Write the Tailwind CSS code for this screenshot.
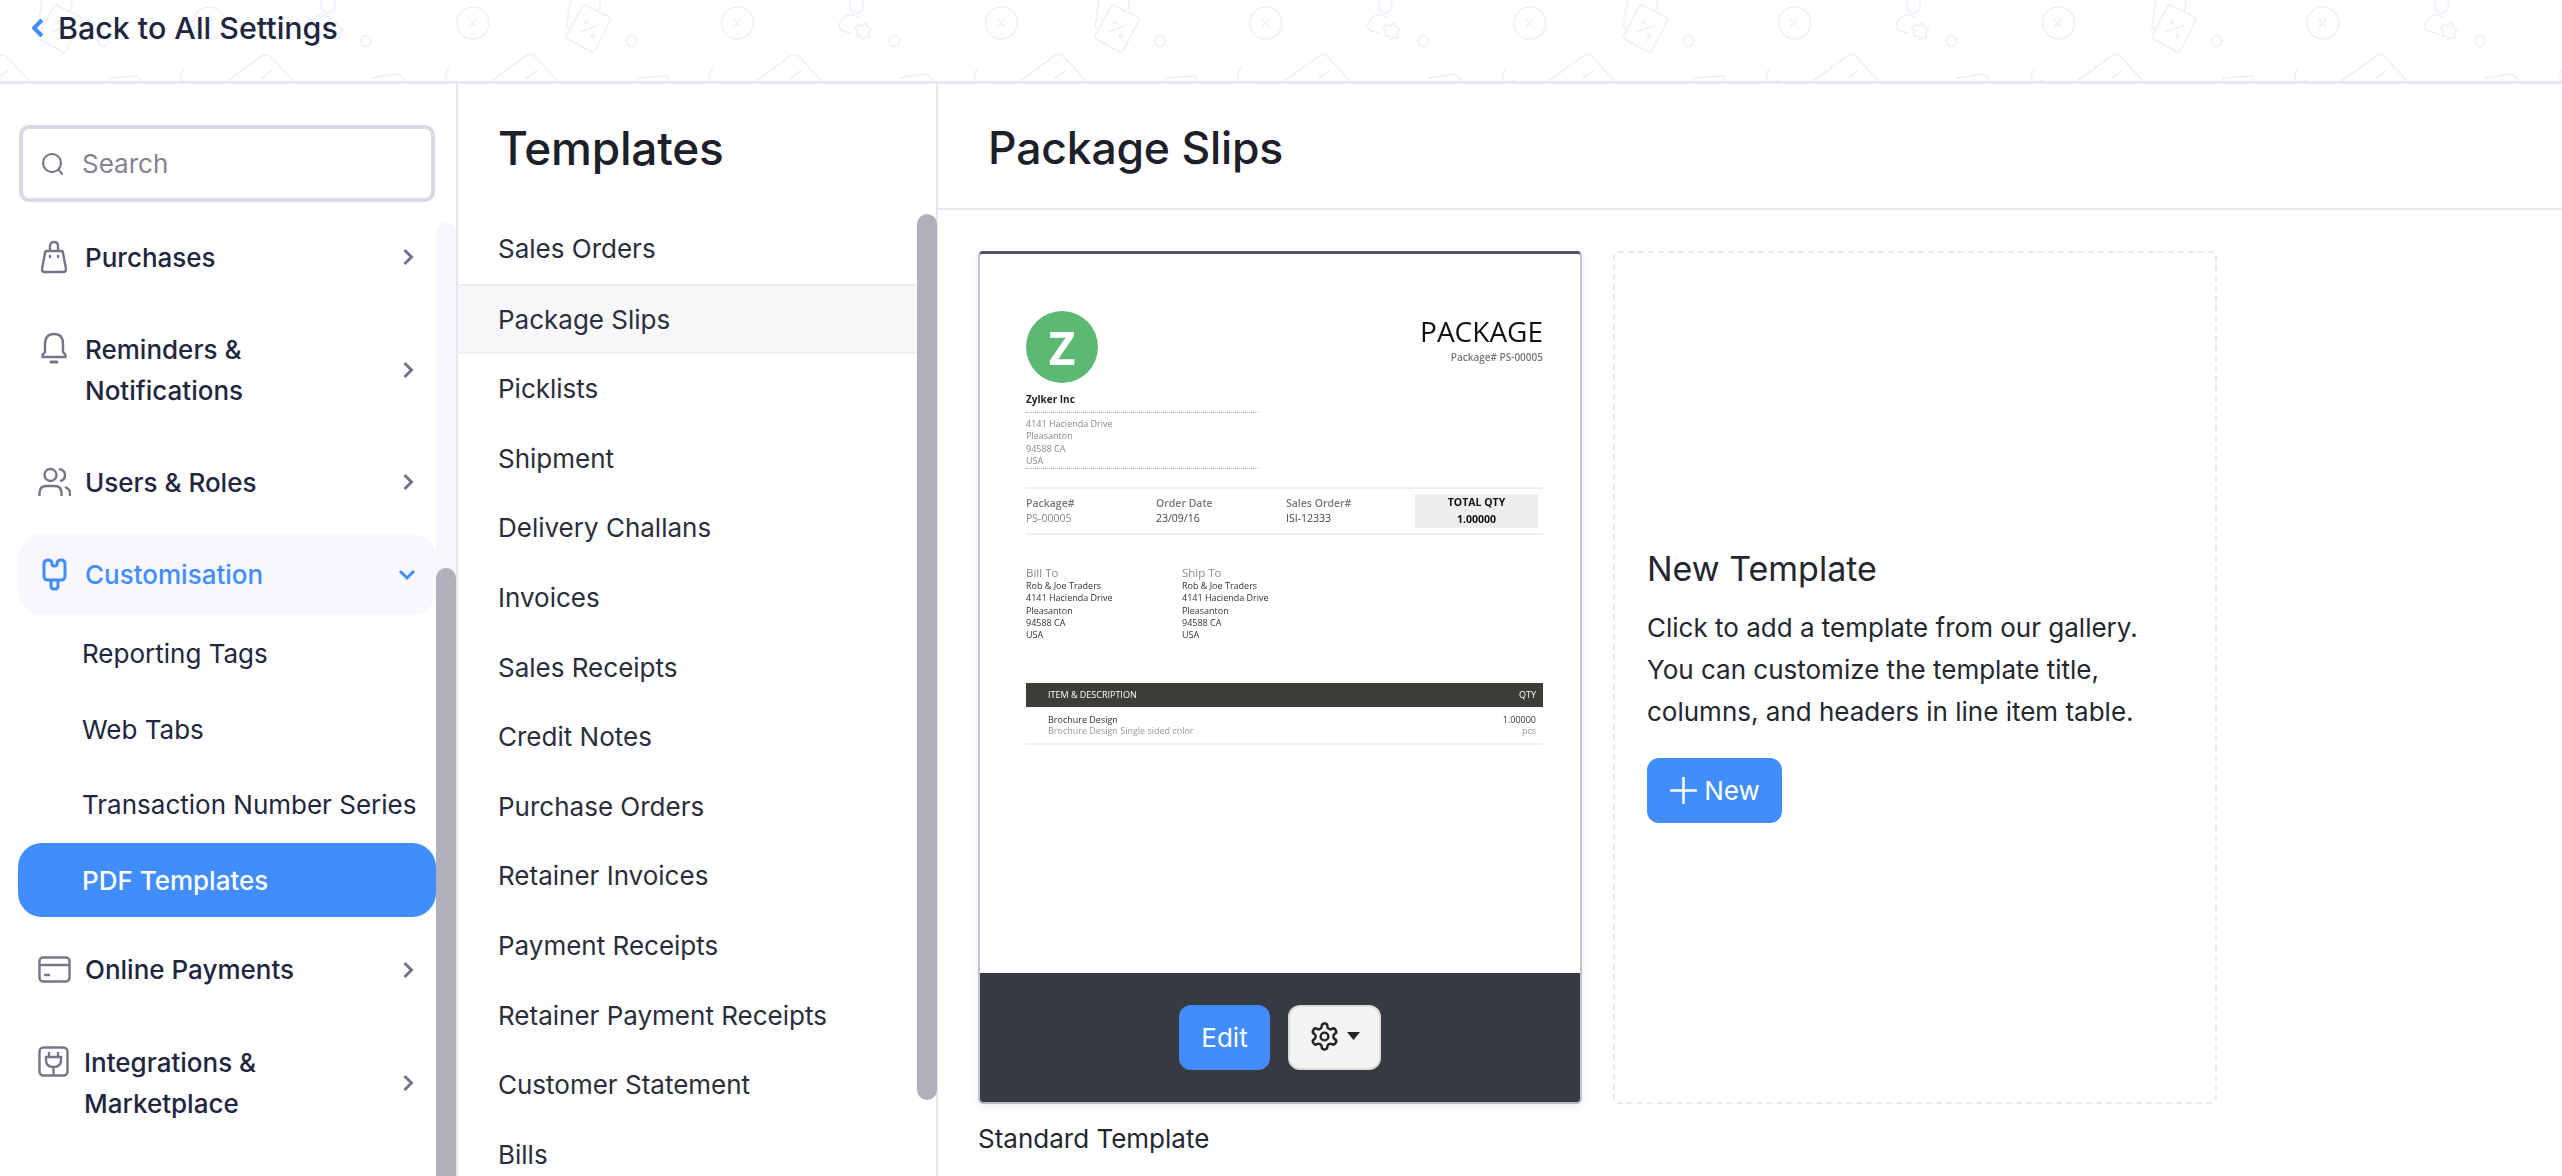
<!doctype html>
<html><head><meta charset="utf-8"><script src="https://cdn.jsdelivr.net/npm/@tailwindcss/browser@4"></script></head>
<body class="bg-white">
<div class="w-[2562px] h-[1176px] overflow-hidden flex flex-col font-['Inter',sans-serif] text-[#1f243a]">
  <header class="relative h-[84px] shrink-0 border-b-[3px] border-[#e8e8f3] flex items-center pb-[26px] pl-[31px] overflow-hidden">
    <svg class="absolute inset-0" width="2562" height="84" fill="none">
      <defs><pattern id="bgp" x="0" y="0" width="528.5" height="84" patternUnits="userSpaceOnUse">
        <g stroke="#eeeefb" stroke-width="1.6" stroke-linecap="round" stroke-linejoin="round">
          <circle cx="209" cy="23" r="16"/><path d="M205 19l7 8M212 19l-7 8"/>
          <circle cx="473" cy="23" r="16"/><path d="M469 19l7 8M476 19l-7 8"/>
          <path d="M42 0l-4 26q0 3 3 3M72 0l-1 10"/>
          <path d="M56 5L81 17q1 1 1 3L66 51q-1 2-3 1L39 39q-1-1-1-3L54 6q1-1 2-1z"/><path d="M52 32l18-7"/><circle cx="58" cy="22" r="1.600"/><circle cx="64" cy="36" r="1.600"/>
          <ellipse cx="103" cy="41" rx="5" ry="5.500"/><ellipse cx="366" cy="41" rx="5" ry="5.500"/>
          <ellipse cx="328" cy="5" rx="7" ry="8"/>
          <path d="M330 18q-8-6-14-1q-8 7-4 13l12 4"/><path d="M330 24l4 2 3-4 2 5 4 2-3 4 1 5-4-1-3 3-2-4-4 0 1-5-3-3 4-3z"/>
          <path d="M-38 82L-2 56q5-4 9 1L30 82M226 82L262 56q5-4 9 1L294 82M490 82L526 56q5-4 9 1L558 82"/><path d="M262 78l10-7M526 78l10-7M-2 78l10-7"/>
          <path d="M108 82l1-4 29-2 3 6M371 78l25-4q5 0 9 8"/>
          <path d="M184 68q-6 10-1 13q4 2 9-1M449 68q-6 10-1 13q4 2 9-1"/>
        </g></pattern></defs>
      <rect width="2562" height="84" fill="url(#bgp)"/>
    </svg>
    <svg class="relative shrink-0" width="14" height="20" viewBox="0 0 14 20" fill="none"><path d="M11 2L3 10l8 8" stroke="#408dfb" stroke-width="4" stroke-linejoin="round"/></svg>
    <span class="relative ml-[13px] text-[30.400px] leading-[40px] font-medium text-[#1e2640]">Back to All Settings</span>
  </header>
  <div class="flex flex-1 min-h-0">
    <!-- settings nav -->
    <aside class="w-[458px] shrink-0 border-r-2 border-[#e6e6ec] flex flex-col">
      <div class="h-[138px] shrink-0 pl-[19px] pt-[41px]">
        <div class="w-[416px] h-[77px] rounded-[10px] border-[4px] border-[#d9d8e5] flex items-center pl-[18px]">
          <svg width="24" height="24" viewBox="0 0 24 24" fill="none" stroke="#6f7080" stroke-width="2"><circle cx="11" cy="11" r="9"/><path d="M18 18l3 4" stroke-linecap="round"/></svg>
          <span class="ml-[17px] text-[26px] text-[#83838f]">Search</span>
        </div>
      </div>
      <div class="flex flex-1 min-h-0">
        <nav class="w-[436px] shrink-0 text-[26px] leading-[41px] font-medium text-[#1f2640]">
          <div class="h-[70px] flex items-center">
            <span class="w-[85px] pl-[41px] shrink-0"><svg class="block" width="26" height="34" viewBox="0 0 26 34" fill="none" stroke="#75758a" stroke-width="2.400"><path d="M6 11h14q2 0 2 2l3 16q0 3-3 3H4q-3 0-3-3l3-16q0-2 2-2z"/><path d="M9 11V6q0-4 4-4t4 4v5"/><path d="M9 16v1M17 16v1" stroke-linecap="round"/></svg></span>
            <span class="flex-1">Purchases</span>
            <svg class="mr-[22px]" width="12" height="20" viewBox="0 0 12 20" fill="none"><path d="M2.500 3l7 7-7 7" stroke="#75758a" stroke-width="3"/></svg>
          </div>
          <div class="h-[156px] flex items-center">
            <span class="w-[85px] pl-[41px] shrink-0 self-start pt-[40px]"><svg class="block" width="26" height="32" viewBox="0 0 26 32" fill="none" stroke="#75758a" stroke-width="2.400"><path d="M13 2q-9 0-9 10v8l-2.500 3v2h23v-2L22 20v-8q0-10-9-10z" stroke-linejoin="round"/><path d="M10 30h6" stroke-linecap="round" stroke-width="3"/></svg></span>
            <span class="flex-1">Reminders &amp;<br>Notifications</span>
            <svg class="mr-[22px]" width="12" height="20" viewBox="0 0 12 20" fill="none"><path d="M2.500 3l7 7-7 7" stroke="#75758a" stroke-width="3"/></svg>
          </div>
          <div class="h-[68px] flex items-center">
            <span class="w-[85px] pl-[38px] shrink-0"><svg class="block" width="33" height="30" viewBox="0 0 33 30" fill="none" stroke="#75758a" stroke-width="2.400"><circle cx="12.500" cy="8" r="6"/><path d="M1.500 29v-3q0-7 7-7h8q7 0 7 7v3"/><path d="M21 2q6 1 6 6t-5 6M27 20q5 2 5 6v3" /></svg></span>
            <span class="flex-1">Users &amp; Roles</span>
            <svg class="mr-[22px]" width="12" height="20" viewBox="0 0 12 20" fill="none"><path d="M2.500 3l7 7-7 7" stroke="#75758a" stroke-width="3"/></svg>
          </div>
          <div class="mt-[18px] ml-[18px] h-[81px] rounded-[24px] bg-[#f7f7fd] flex items-center text-[#408dfb]">
            <span class="w-[67px] pl-[24px] shrink-0"><svg class="block" width="25" height="33" viewBox="0 0 25 33" fill="none" stroke="#408dfb" stroke-width="3"><path d="M6 2Q2 2 2 6v12q0 4 4 4h13q4 0 4-4V6q0-4-4-4-4 0-4 4 0 2-2.500 2T10 6Q10 2 6 2z"/><path d="M9 22v6q0 3 3.500 3t3.500-3v-6"/></svg></span>
            <span class="flex-1">Customisation</span>
            <svg class="mr-[20px]" width="18" height="12" viewBox="0 0 18 12" fill="none"><path d="M2 2l7 7 7-7" stroke="#408dfb" stroke-width="3"/></svg>
          </div>
          <div class="font-normal pl-[82px] whitespace-nowrap">
            <div class="h-[77px] flex items-center">Reporting Tags</div>
            <div class="h-[74px] flex items-center">Web Tabs</div>
            <div class="h-[77px] flex items-center">Transaction Number Series</div>
          </div>
          <div class="ml-[18px] h-[74px] rounded-[24px] bg-[#408dfb] text-white flex items-center pl-[64px]">PDF Templates</div>
          <div class="mt-[17px] h-[71px] flex items-center">
            <span class="w-[85px] pl-[38px] shrink-0"><svg class="block" width="33" height="27" viewBox="0 0 33 27" fill="none" stroke="#75758a" stroke-width="2.400"><rect x="1.500" y="1.500" width="30" height="24" rx="3.500"/><path d="M1.500 9h30"/><path d="M7 19h4" stroke-linecap="round"/></svg></span>
            <span class="flex-1">Online Payments</span>
            <svg class="mr-[22px]" width="12" height="20" viewBox="0 0 12 20" fill="none"><path d="M2.500 3l7 7-7 7" stroke="#75758a" stroke-width="3"/></svg>
          </div>
          <div class="h-[156px] flex items-center">
            <span class="w-[84px] pl-[38px] shrink-0 self-start pt-[41px]"><svg class="block" width="31" height="31" viewBox="0 0 31 31" fill="none" stroke="#75758a" stroke-width="2.400"><rect x="1.500" y="1.500" width="28" height="28" rx="4"/><path d="M11 6v5M20 6v5M8 11h15v3q0 7-7.500 7T8 14zM15.500 21v8"/></svg></span>
            <span class="flex-1">Integrations &amp;<br>Marketplace</span>
            <svg class="mr-[22px]" width="12" height="20" viewBox="0 0 12 20" fill="none"><path d="M2.500 3l7 7-7 7" stroke="#75758a" stroke-width="3"/></svg>
          </div>
        </nav>
        <div class="w-[20px] shrink-0 bg-[#f7f7fd] rounded-t-[10px] flex flex-col"><div class="mt-[346px] flex-1 bg-[#b0afbc] rounded-t-[10px]"></div></div>
      </div>
    </aside>
    <!-- templates list -->
    <section class="w-[480px] shrink-0 border-r-2 border-[#e6e6ec] flex flex-col">
      <h2 class="h-[128px] shrink-0 flex items-center pl-[40px] text-[46px] font-medium text-[#1c2029] tracking-[-0.2px]">Templates</h2>
      <div class="flex flex-1 min-h-0">
        <ul class="w-[459px] shrink-0 text-[26px] text-[#2a2e3c]">
          <li class="h-[72px] pt-[1px] flex items-center pl-[40px]">Sales Orders</li>
          <li class="h-[70px] flex items-center pl-[40px] bg-[#f8f8fb] border-y-[2px] border-[#ececf2]">Package Slips</li>
          <li class="h-[69.600px] flex items-center pl-[40px]">Picklists</li>
          <li class="h-[69.600px] flex items-center pl-[40px]">Shipment</li>
          <li class="h-[69.600px] flex items-center pl-[40px]">Delivery Challans</li>
          <li class="h-[69.600px] flex items-center pl-[40px]">Invoices</li>
          <li class="h-[69.600px] flex items-center pl-[40px]">Sales Receipts</li>
          <li class="h-[69.600px] flex items-center pl-[40px]">Credit Notes</li>
          <li class="h-[69.600px] flex items-center pl-[40px]">Purchase Orders</li>
          <li class="h-[69.600px] flex items-center pl-[40px]">Retainer Invoices</li>
          <li class="h-[69.600px] flex items-center pl-[40px]">Payment Receipts</li>
          <li class="h-[69.600px] flex items-center pl-[40px]">Retainer Payment Receipts</li>
          <li class="h-[69.600px] flex items-center pl-[40px]">Customer Statement</li>
          <li class="h-[69.600px] flex items-center pl-[40px]">Bills</li>
        </ul>
        <div class="w-[20px] shrink-0 flex flex-col"><div class="mt-[2px] h-[886px] bg-[#b0afbc] rounded-[10px]"></div></div>
      </div>
    </section>
    <!-- main -->
    <main class="flex-1 min-w-0 flex flex-col">
      <h1 class="h-[126px] shrink-0 border-b-2 border-[#e6e6ec] flex items-center pl-[50px] pt-[4px] text-[44.500px] font-medium text-[#1c2029] tracking-[-0.2px]">Package Slips</h1>
      <div class="flex gap-[31px] pl-[40px] pt-[41px] items-start">
        <div>
          <div class="w-[604px] h-[853px] rounded-[5px] border-x-2 border-b-2 border-t-[3px] border-x-[#c3c2d4] border-b-[#b5b5c4] border-t-[#53545f] shadow-[0_2px_8px_rgba(60,60,110,0.10)] flex flex-col overflow-hidden">
            <div class="h-[719px] bg-white pl-[46px] pr-[37px] pt-[57px] font-['Open_Sans',sans-serif] blur-[0.25px]">
              <div class="flex justify-between h-[176px]">
                <div class="w-[232px]">
                  <div class="w-[72px] h-[72px] rounded-full bg-[#5bb974] text-white flex items-center justify-center text-[46px] font-bold leading-none">Z</div>
                  <div class="mt-[9px] text-[10px] leading-[14px] font-bold text-[#222]">Zylker Inc</div>
                  <div class="mt-[6px] border-y border-dotted border-[#aaa] pt-[5px] h-[57px] text-[9px] leading-[12.300px] text-[#888]">4141 Hacienda Drive<br>Pleasanton<br>94588 CA<br>USA</div>
                </div>
                <div class="text-right pt-[2px]">
                  <div class="text-[28px] leading-[36px] text-[#111]">PACKAGE</div>
                  <div class="mt-[1px] text-[10px] leading-[14px] font-semibold text-[#777]">Package# PS-00005</div>
                </div>
              </div>
              <div class="border-y-2 border-[#eee] h-[48px] flex text-[10.500px] leading-[15px] items-center">
                <div class="w-[130px] text-[#777]"><div class="font-semibold">Package#</div><div class="text-[#888]">PS-00005</div></div>
                <div class="w-[130px] text-[#444]"><div class="font-semibold text-[#777]">Order Date</div><div>23/09/16</div></div>
                <div class="w-[129px] text-[#444]"><div class="font-semibold text-[#777]">Sales Order#</div><div>ISI-12333</div></div>
                <div class="w-[123px] h-[34px] bg-[#eee] text-center font-bold text-[#111] leading-[17px]"><div>TOTAL QTY</div><div>1.00000</div></div>
              </div>
              <div class="mt-[31px] flex h-[117px] text-[9px] leading-[12.300px] text-[#333] font-medium">
                <div class="w-[156px]"><div class="text-[11.500px] leading-[14px] text-[#888] font-normal">Bill To</div>Rob &amp; Joe Traders<br>4141 Hacienda Drive<br>Pleasanton<br>94588 CA<br>USA</div>
                <div><div class="text-[11.500px] leading-[14px] text-[#888] font-normal">Ship To</div>Rob &amp; Joe Traders<br>4141 Hacienda Drive<br>Pleasanton<br>94588 CA<br>USA</div>
              </div>
              <div class="h-[24px] bg-[#3d3c37] text-white flex items-center justify-between pl-[22px] pr-[7px] text-[9px]"><span>ITEM &amp; DESCRIPTION</span><span>QTY</span></div>
              <div class="h-[38px] border-b-2 border-[#eee] pt-[7px] pl-[22px] pr-[7px] text-[9px] leading-[11px] flex justify-between">
                <div><div class="text-[#333]">Brochure Design</div><div class="text-[#999]">Brochure Design Single sided color</div></div>
                <div class="text-right"><div class="text-[#333]">1.00000</div><div class="text-[#999]">pcs</div></div>
              </div>
            </div>
            <div class="flex-1 bg-[#373a42] flex justify-center pt-[32px] gap-[18px]">
              <button class="w-[91px] h-[65px] rounded-[12px] bg-[#408dfb] text-white text-[26px]">Edit</button>
              <button class="w-[93px] h-[65px] rounded-[12px] bg-[#f4f4f2] border-2 border-[#dcdcdc] flex items-center justify-center gap-[7px] pb-[3px]">
                <svg width="31" height="31" viewBox="0 0 24 24" fill="none" stroke="#22242c" stroke-width="1.900" stroke-linecap="round" stroke-linejoin="round"><path d="M12.220 2h-.44a2 2 0 0 0-2 2v.18a2 2 0 0 1-1 1.730l-.43.25a2 2 0 0 1-2 0l-.15-.08a2 2 0 0 0-2.730.73l-.22.38a2 2 0 0 0 .73 2.730l.15.1a2 2 0 0 1 1 1.720v.51a2 2 0 0 1-1 1.740l-.15.09a2 2 0 0 0-.73 2.730l.22.38a2 2 0 0 0 2.730.73l.15-.08a2 2 0 0 1 2 0l.43.25a2 2 0 0 1 1 1.730V20a2 2 0 0 0 2 2h.44a2 2 0 0 0 2-2v-.18a2 2 0 0 1 1-1.730l.43-.25a2 2 0 0 1 2 0l.15.08a2 2 0 0 0 2.730-.73l.22-.39a2 2 0 0 0-.73-2.730l-.15-.08a2 2 0 0 1-1-1.740v-.5a2 2 0 0 1 1-1.740l.15-.09a2 2 0 0 0 .73-2.730l-.22-.38a2 2 0 0 0-2.730-.73l-.15.08a2 2 0 0 1-2 0l-.43-.25a2 2 0 0 1-1-1.730V4a2 2 0 0 0-2-2z"/><circle cx="12" cy="12" r="3"/></svg>
                <svg width="13" height="8" viewBox="0 0 13 8"><path d="M0 0h13L6.500 8z" fill="#22242c"/></svg>
              </button>
            </div>
          </div>
          <div class="mt-[16px] text-[26px] leading-[38px] text-[#24272f]">Standard Template</div>
        </div>
        <div class="w-[604px] h-[853px] rounded-[5px] border-2 border-dashed border-[#e9e9f0] flex flex-col justify-center pl-[32px] pt-[14px]">
          <div class="text-[34px] leading-[44px] text-[#24272f]">New Template</div>
          <p class="mt-[16px] text-[26px] leading-[42px] text-[#24272f]">Click to add a template from our gallery.<br>You can customize the template title,<br>columns, and headers in line item table.</p>
          <button class="mt-[25px] w-[135px] h-[65px] rounded-[12px] bg-[#408dfb] text-white text-[26px] flex items-center justify-center gap-[6px]">
            <svg width="29" height="29" viewBox="0 0 29 29" fill="none" stroke="#fff" stroke-width="2.500"><path d="M14.500 1v27M1 14.500h27"/></svg>New
          </button>
        </div>
      </div>
    </main>
  </div>
</div>
</body></html>
